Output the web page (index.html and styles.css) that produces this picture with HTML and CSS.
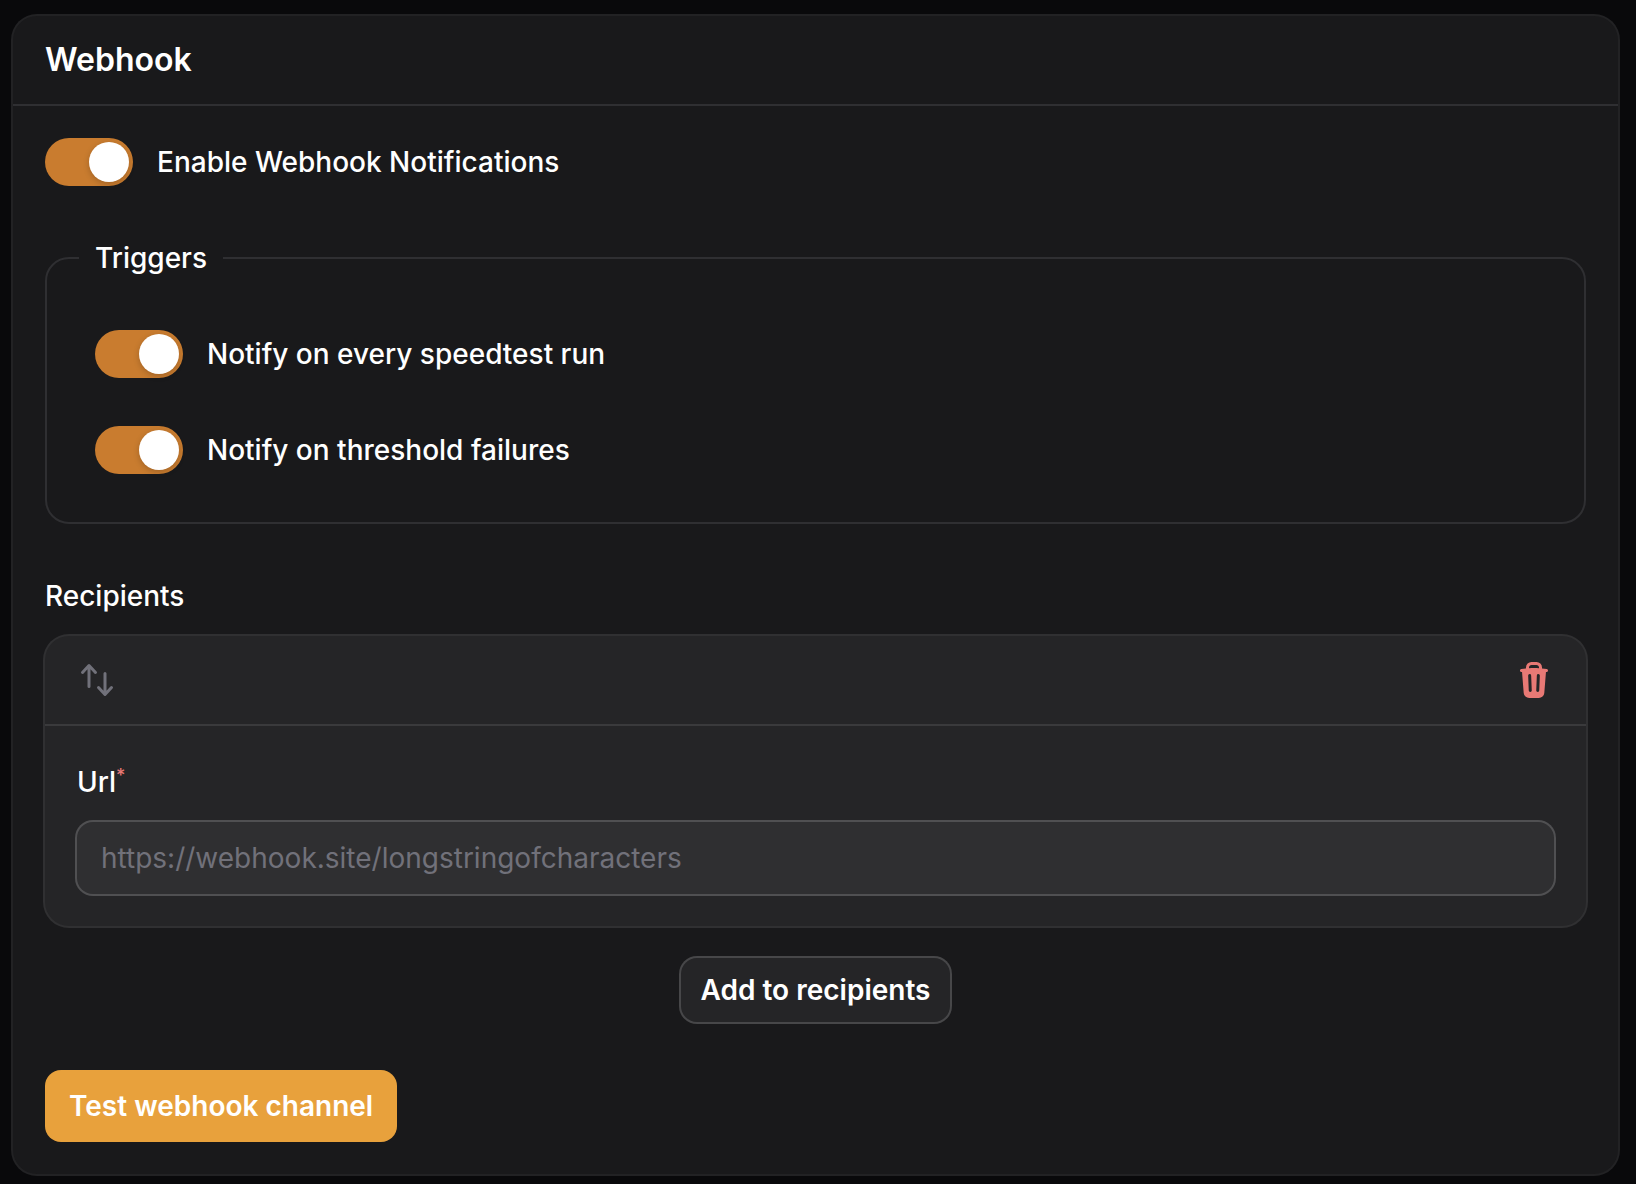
FILE: index.html
```html
<!DOCTYPE html>
<html lang="en">
<head>
<meta charset="utf-8">
<meta name="viewport" content="width=device-width, initial-scale=1">
<title>Webhook</title>
<link rel="stylesheet" href="styles.css">
</head>
<body>
<main class="page">
  <section class="section">
    <header class="section-header">
      <h2 class="section-title">Webhook</h2>
    </header>
    <form class="section-content">
      <label class="toggle-row">
        <input class="toggle" type="checkbox" role="switch" checked>
        <span>Enable Webhook Notifications</span>
      </label>

      <fieldset class="fieldset">
        <legend class="legend">Triggers</legend>
        <div class="fieldset-body">
          <label class="toggle-row">
            <input class="toggle" type="checkbox" role="switch" checked>
            <span>Notify on every speedtest run</span>
          </label>
          <label class="toggle-row">
            <input class="toggle" type="checkbox" role="switch" checked>
            <span>Notify on threshold failures</span>
          </label>
        </div>
      </fieldset>

      <div class="repeater" role="group" aria-labelledby="recipients-label">
        <span class="label" id="recipients-label">Recipients</span>
        <div class="item">
          <div class="item-header">
            <button class="icon-button" type="button" aria-label="Move">
              <svg class="icon" viewBox="0 0 20 20" fill="currentColor" fill-rule="evenodd" aria-hidden="true"><path d="M2.24 6.8a.75.75 0 001.06-.04l1.95-2.1v8.59a.75.75 0 001.5 0V4.66l1.95 2.1a.75.75 0 101.1-1.02l-3.25-3.5a.75.75 0 00-1.1 0L2.2 5.74a.75.75 0 00.04 1.06zm8 6.4a.75.75 0 00-.04 1.06l3.25 3.5a.75.75 0 001.1 0l3.25-3.5a.75.75 0 10-1.1-1.02l-1.95 2.1V6.75a.75.75 0 00-1.5 0v8.59l-1.95-2.1a.75.75 0 00-1.06-.04z"/></svg>
            </button>
            <button class="icon-button icon-button-danger" type="button" aria-label="Delete">
              <svg class="icon" viewBox="0 0 20 20" fill="currentColor" fill-rule="evenodd" aria-hidden="true"><path d="M8.75 1A2.75 2.75 0 006 3.75v.443c-.795.077-1.584.176-2.365.298a.75.75 0 10.23 1.482l.149-.022.841 10.518A2.75 2.75 0 007.596 19h4.807a2.75 2.75 0 002.742-2.53l.841-10.52.149.023a.75.75 0 00.23-1.482A41.03 41.03 0 0014 4.193V3.75A2.75 2.75 0 0011.25 1h-2.5zM10 4c.84 0 1.673.025 2.5.075V3.75c0-.69-.56-1.25-1.25-1.25h-2.5c-.69 0-1.25.56-1.25 1.25v.325C8.327 4.025 9.16 4 10 4zM8.58 7.72a.75.75 0 00-1.5.06l.3 7.5a.75.75 0 101.5-.06l-.3-7.5zm4.34.06a.75.75 0 10-1.5-.06l-.3 7.5a.75.75 0 101.5.06l.3-7.5z"/></svg>
            </button>
          </div>
          <div class="item-content">
            <label class="label" for="url">Url<sup class="required">*</sup></label>
            <input class="input" id="url" type="url" placeholder="https://webhook.site/longstringofcharacters" required>
          </div>
        </div>
        <div class="repeater-actions">
          <button class="button button-outline" type="button">Add to recipients</button>
        </div>
      </div>

      <div class="actions">
        <button class="button button-primary" type="button">Test webhook channel</button>
      </div>
    </form>
  </section>
</main>
</body>
</html>
```
FILE: styles.css
```css
*,
*::before,
*::after {
  box-sizing: border-box;
}

body {
  margin: 0;
  background: #09090b;
  color: #fff;
  font-family: Inter, "Liberation Sans", sans-serif;
  font-size: 28px;
  font-weight: 500;
  line-height: 48px;
}

button,
input {
  margin: 0;
  font: inherit;
  color: inherit;
}

.page {
  padding: 16px 18px 10px 13px;
}

.section {
  background: #19191b;
  border-radius: 24px;
  box-shadow: 0 0 0 2px #222224;
}

.section-header {
  padding: 20px 32px;
}

.section-title {
  margin: 0;
  font-size: 32px;
  font-weight: 600;
  line-height: 48px;
}

.section-content {
  display: flex;
  flex-direction: column;
  gap: 48px;
  padding: 32px;
  border-top: 2px solid #2f2f32;
}

.toggle-row {
  display: flex;
  align-items: center;
  gap: 24px;
}

.toggle {
  flex: none;
  appearance: none;
  display: flex;
  justify-content: flex-start;
  width: 88px;
  height: 48px;
  padding: 4px;
  border-radius: 24px;
  background: #3f3f46;
  cursor: pointer;
}

.toggle::before {
  content: "";
  width: 40px;
  height: 40px;
  border-radius: 50%;
  background: #fff;
  box-shadow: 0 2px 6px rgba(0, 0, 0, 0.2);
}

.toggle:checked {
  justify-content: flex-end;
  background: #c97c2f;
}

.fieldset {
  min-width: 0;
  margin: 0;
  padding: 48px;
  border: 2px solid #2f2f32;
  border-radius: 24px;
}

.legend {
  margin-left: -16px;
  padding: 0 16px;
}

.fieldset-body {
  display: flex;
  flex-direction: column;
  gap: 48px;
}

.repeater {
  display: flex;
  flex-direction: column;
}

.label {
  display: block;
  margin-bottom: 16px;
}

.required {
  color: #e87975;
  font-size: 18px;
  line-height: 0;
}

.item {
  background: #252527;
  border-radius: 24px;
  box-shadow: 0 0 0 2px #303032;
}

.item-header {
  display: flex;
  align-items: center;
  justify-content: space-between;
  padding: 24px 32px;
}

.icon-button {
  padding: 0;
  border: 0;
  background: none;
  color: #71717a;
  cursor: pointer;
}

.icon-button-danger {
  color: #e87975;
}

.icon {
  display: block;
  width: 40px;
  height: 40px;
}

.item-content {
  padding: 32px;
  border-top: 2px solid #3a3a3c;
}

.input {
  display: block;
  width: 100%;
  height: 72px;
  padding: 0 24px;
  border: 0;
  border-radius: 16px;
  outline: 0;
  background: #2f2f31;
  box-shadow: 0 0 0 2px #505052;
  font-weight: 400;
}

.input::placeholder {
  color: #71717a;
  opacity: 1;
}

.repeater-actions {
  display: flex;
  justify-content: center;
  padding-top: 32px;
}

.button {
  border: 0;
  border-radius: 16px;
  font-weight: 600;
  line-height: 40px;
  cursor: pointer;
}

.button-outline {
  padding: 12px 20px;
  background: #252527;
  box-shadow: 0 0 0 2px #474749;
}

.button-primary {
  padding: 16px 24px;
  background: #e8a13c;
}

.actions {
  display: flex;
}
```
